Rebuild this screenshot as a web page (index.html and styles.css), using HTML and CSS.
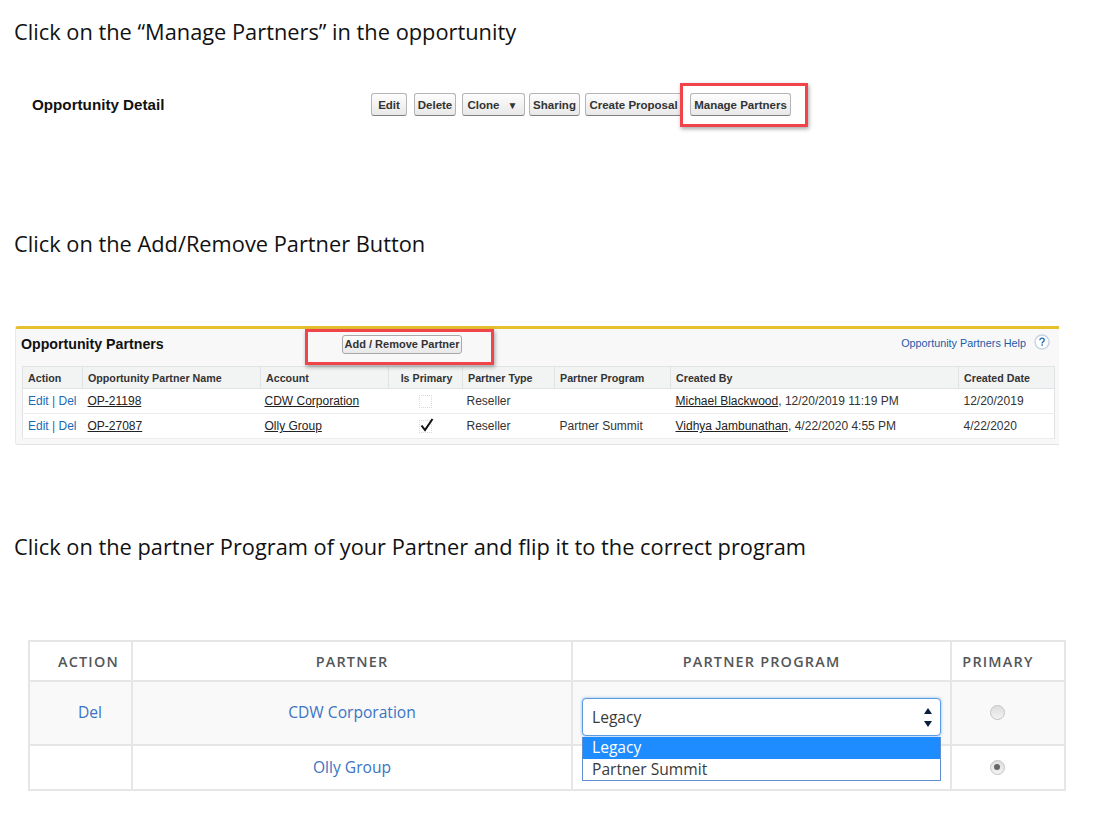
FILE: index.html
```html
<!DOCTYPE html>
<html lang="en">
<head>
    <meta charset="UTF-8">
    <title>Manage Partners</title>
    <link rel="stylesheet" href="styles.css">
</head>
<body>

    <h2 class="step-title">Click on the “Manage Partners” in the opportunity</h2>

    <div class="detail-bar">
        <div class="detail-name">Opportunity Detail</div>
        <div class="detail-buttons">
            <button class="sf-btn btn-edit">Edit</button>
            <button class="sf-btn btn-delete">Delete</button>
            <button class="sf-btn btn-clone">Clone <span class="caret">▼</span></button>
            <button class="sf-btn btn-sharing">Sharing</button>
            <button class="sf-btn btn-proposal">Create Proposal</button>
            <button class="sf-btn btn-manage">Manage Partners</button>
        </div>
        <div class="red-box box-manage"></div>
    </div>

    <h2 class="step-title title-add">Click on the Add/Remove Partner Button</h2>

    <section class="related-panel">
        <div class="panel-head">
            <h3 class="panel-title">Opportunity Partners</h3>
            <button class="sf-btn btn-add">Add / Remove Partner</button>
            <div class="panel-help">
                <a class="help-link" href="#">Opportunity Partners Help</a>
                <svg class="help-icon" width="16" height="16" viewBox="0 0 16 16">
                    <circle cx="8" cy="8" r="7" fill="#fff" stroke="#c5d3e2" stroke-width="1.4"/>
                    <path d="M5.9 6.2c.1-1.3 1-2 2.2-2s2.1.7 2.1 1.8c0 1.700-2.100 1.700-2.100 3.400" fill="none" stroke="#1b6ab5" stroke-width="1.300"/>
                    <rect x="7.400" y="10.300" width="1.400" height="1.500" fill="#1b6ab5"/>
                </svg>
            </div>
        </div>
        <div class="red-box box-add"></div>
        <table class="partners-list">
            <colgroup>
                <col class="c-action"><col class="c-name"><col class="c-account"><col class="c-primary">
                <col class="c-type"><col class="c-program"><col class="c-by"><col class="c-date">
            </colgroup>
            <thead>
                <tr>
                    <th>Action</th>
                    <th>Opportunity Partner Name</th>
                    <th>Account</th>
                    <th class="center th-primary">Is Primary</th>
                    <th>Partner Type</th>
                    <th>Partner Program</th>
                    <th>Created By</th>
                    <th>Created Date</th>
                </tr>
            </thead>
            <tbody>
                <tr>
                    <td class="wide"><a class="act" href="#">Edit</a> <span class="act">|</span> <a class="act" href="#">Del</a></td>
                    <td class="wide"><a href="#">OP-21198</a></td>
                    <td><a href="#">CDW Corporation</a></td>
                    <td class="center"><span class="check-cell"></span></td>
                    <td>Reseller</td>
                    <td class="wide"></td>
                    <td class="wide"><a href="#">Michael Blackwood</a>, 12/20/2019 11:19 PM</td>
                    <td class="wide">12/20/2019</td>
                </tr>
                <tr>
                    <td class="wide"><a class="act" href="#">Edit</a> <span class="act">|</span> <a class="act" href="#">Del</a></td>
                    <td class="wide"><a href="#">OP-27087</a></td>
                    <td><a href="#">Olly Group</a></td>
                    <td class="center">
                        <span class="check-cell">
                            <svg width="14" height="14" viewBox="0 0 14 14"><path d="M1.500 7.500 L5 12 L12.500 1" fill="none" stroke="#111" stroke-width="2"/></svg>
                        </span>
                    </td>
                    <td>Reseller</td>
                    <td class="wide">Partner Summit</td>
                    <td class="wide"><a href="#">Vidhya Jambunathan</a>, 4/22/2020 4:55 PM</td>
                    <td class="wide">4/22/2020</td>
                </tr>
            </tbody>
        </table>
    </section>

    <h2 class="step-title title-flip">Click on the partner Program of your Partner and flip it to the correct program</h2>

    <table class="manage-table">
        <colgroup>
            <col class="m-action"><col class="m-partner"><col class="m-program"><col class="m-primary">
        </colgroup>
        <thead>
            <tr>
                <th class="th-action">ACTION</th>
                <th>PARTNER</th>
                <th>PARTNER PROGRAM</th>
                <th class="th-primary">PRIMARY</th>
            </tr>
        </thead>
        <tbody>
            <tr class="row-open">
                <td class="td-del"><a href="#">Del</a></td>
                <td><a href="#">CDW Corporation</a></td>
                <td class="td-select">
                    <div class="select-wrap">
                        <div class="select-box">
                            <span>Legacy</span>
                            <svg width="10" height="21" viewBox="0 0 10 21">
                                <path d="M5 1 L9 7 L1 7 Z" fill="#0a1f40"/>
                                <path d="M1 14 L9 14 L5 20 Z" fill="#0a1f40"/>
                            </svg>
                        </div>
                        <ul class="select-menu">
                            <li class="picked">Legacy</li>
                            <li>Partner Summit</li>
                        </ul>
                    </div>
                </td>
                <td class="td-radio"><span class="radio"></span></td>
            </tr>
            <tr class="row-second">
                <td></td>
                <td><a href="#">Olly Group</a></td>
                <td></td>
                <td class="td-radio"><span class="radio on"></span></td>
            </tr>
        </tbody>
    </table>

</body>
</html>
```

FILE: styles.css
```css
body {
    margin: 0;
    padding: 20px 0 0 0;
    background-color: #fff;
    color: #222;
    font-family: 'Liberation Sans', Arial, sans-serif;
}

.step-title {
    margin: 0 0 0 14px;
    font-family: 'Open Sans', sans-serif;
    font-size: 21.8px;
    font-weight: 400;
    line-height: 24px;
    color: #111;
}

.title-add {
    margin-top: 116px;
}

.title-flip {
    margin-top: 90px;
}

/* Buttons */
.sf-btn {
    height: 23px;
    padding: 0;
    border: 1px solid #b5b5b5;
    border-bottom-color: #7f7f7f;
    border-radius: 3px;
    background: linear-gradient(#fdfdfd, #e8e8e8);
    color: #333;
    font-family: 'Liberation Sans', Arial, sans-serif;
    font-size: 11.5px;
    font-weight: bold;
    text-align: center;
}

.red-box {
    position: absolute;
    border: 3px solid #f0434a;
    box-shadow: 1px 2px 4px rgba(0, 0, 0, 0.35);
    box-sizing: border-box;
}

/* Opportunity detail bar */
.detail-bar {
    position: relative;
    display: flex;
    align-items: center;
    height: 23px;
    margin-top: 49px;
    padding-left: 32px;
}

.detail-name {
    width: 339px;
    font-size: 15.2px;
    font-weight: bold;
    color: #111;
}

.detail-buttons {
    display: flex;
}

.btn-edit { width: 36px; margin-right: 7px; }
.btn-delete { width: 42px; margin-right: 6px; }
.btn-clone { width: 63px; margin-right: 4px; padding-right: 2px; }
.btn-sharing { width: 51px; margin-right: 5px; }
.btn-proposal { width: 97px; margin-right: 8px; white-space: nowrap; }
.btn-manage { width: 101px; }

.caret {
    margin-left: 5px;
    font-size: 10px;
}

.box-manage {
    left: 680px;
    top: -10px;
    width: 128px;
    height: 44px;
}

/* Opportunity partners related list */
.related-panel {
    position: relative;
    width: 1044px;
    height: 119px;
    margin: 70px 0 0 15px;
    box-sizing: border-box;
    border-top: 3px solid #e5c130;
    border-bottom: 1px solid #e3e3e3;
    border-left: 1px solid #e8e8e8;
    border-radius: 3px 0 0 3px;
    background-color: #f8f8f8;
}

.panel-head {
    display: flex;
    align-items: center;
    height: 30px;
    margin-bottom: 7px;
    padding: 0 10px 0 5px;
}

.panel-title {
    width: 321px;
    margin: 0;
    font-size: 14.2px;
    font-weight: bold;
    color: #111;
}

.btn-add {
    width: 120px;
    height: 19px;
    border-color: #a9a9a9;
    font-size: 11px;
}

.panel-help {
    display: flex;
    align-items: center;
    gap: 8px;
    margin: -2px -1px 0 auto;
}

.help-link {
    color: #1b5ba7;
    font-size: 10.8px;
    text-decoration: none;
}

.help-icon {
    margin-top: -3px;
}

.box-add {
    left: 289px;
    top: 0;
    width: 189px;
    height: 36px;
}

.partners-list {
    width: 1032px;
    margin-left: 6px;
    border-collapse: collapse;
    table-layout: fixed;
    background-color: #fff;
    border: 1px solid #e0e3e5;
    font-size: 12px;
}

.c-action { width: 60px; }
.c-name { width: 178px; }
.c-account { width: 128px; }
.c-primary { width: 74px; }
.c-type { width: 92px; }
.c-program { width: 116px; }
.c-by { width: 288px; }
.c-date { width: 96px; }

.partners-list th {
    height: 21px;
    padding: 0 5px;
    border-left: 1px solid #e0e3e5;
    border-bottom: 1px solid #e0e3e5;
    background-color: #f2f3f3;
    color: #333;
    font-size: 10.7px;
    font-weight: bold;
    text-align: left;
}

.partners-list th.th-primary {
    padding-left: 7px;
}

.partners-list td {
    height: 24px;
    padding: 0 4px;
    border-bottom: 1px solid #ececec;
    color: #333;
    white-space: nowrap;
}

.partners-list td.wide {
    padding: 0 5px;
}

.partners-list a {
    color: #222;
}

.partners-list a.act,
.partners-list span.act {
    color: #1b6ab5;
    text-decoration: none;
}

.partners-list .center {
    text-align: center;
}

.check-cell {
    display: inline-flex;
    justify-content: center;
    align-items: center;
    width: 11px;
    height: 11px;
    border: 1px dotted #d8d8d8;
    vertical-align: middle;
}

.check-cell svg {
    flex: none;
    margin: -4px 0 0 2px;
}

/* Manage partners table */
.manage-table {
    width: 1036px;
    margin: 81px 0 0 28px;
    border-collapse: collapse;
    table-layout: fixed;
    font-family: 'Open Sans', sans-serif;
    font-size: 15.6px;
    text-align: center;
}

.m-action { width: 103px; }
.m-partner { width: 440px; }
.m-program { width: 379px; }
.m-primary { width: 114px; }

.manage-table th,
.manage-table td {
    border: 2px solid #e6e6e6;
    padding: 0;
}

.manage-table th {
    height: 38px;
    color: #54565a;
    font-size: 14.4px;
    font-weight: 600;
    letter-spacing: 1.2px;
}

.manage-table .th-action {
    text-align: left;
    padding-left: 28px;
}

.manage-table .th-primary {
    padding-right: 20px;
}

.manage-table a {
    color: #3b74c4;
    text-decoration: none;
}

.row-open td {
    height: 59px;
    padding-bottom: 3px;
    background-color: #f9f9f9;
}

.row-open .td-del {
    text-align: left;
    padding-left: 48px;
}

.row-second td {
    height: 41px;
    padding-bottom: 2px;
}

.manage-table .row-open .td-select {
    padding: 0;
    vertical-align: top;
}

.manage-table .td-radio {
    padding-right: 22px;
}

.radio {
    display: inline-block;
    position: relative;
    width: 13px;
    height: 13px;
    margin-bottom: 2px;
    border: 1px solid #c4c4c4;
    border-radius: 50%;
    background: linear-gradient(#dedede, #f2f2f2);
    vertical-align: middle;
}

.radio.on::after {
    content: "";
    position: absolute;
    left: 3.5px;
    top: 3.5px;
    width: 6px;
    height: 6px;
    border-radius: 50%;
    background-color: #666;
}

.select-wrap {
    position: relative;
    margin: 16px 9px 0 9px;
}

.select-box {
    display: flex;
    align-items: center;
    justify-content: space-between;
    height: 38px;
    padding: 0 7px 0 9px;
    box-sizing: border-box;
    border: 1px solid #5b9be0;
    border-radius: 4px;
    background-color: #fff;
    box-shadow: 0 0 3px #7eb3ee;
    color: #3a3a3a;
}

.select-menu {
    position: absolute;
    left: 0;
    right: 0;
    top: 39px;
    margin: 0;
    padding: 0;
    list-style: none;
    box-sizing: border-box;
    border: 1px solid #5f8fd0;
    border-top: none;
    background-color: #fff;
    color: #3a3a3a;
    text-align: left;
    font-size: 15.6px;
    line-height: 21.5px;
    z-index: 2;
}

.select-menu li {
    padding-left: 9px;
}

.select-menu .picked {
    background-color: #1e8cff;
    color: #fff;
}
```
